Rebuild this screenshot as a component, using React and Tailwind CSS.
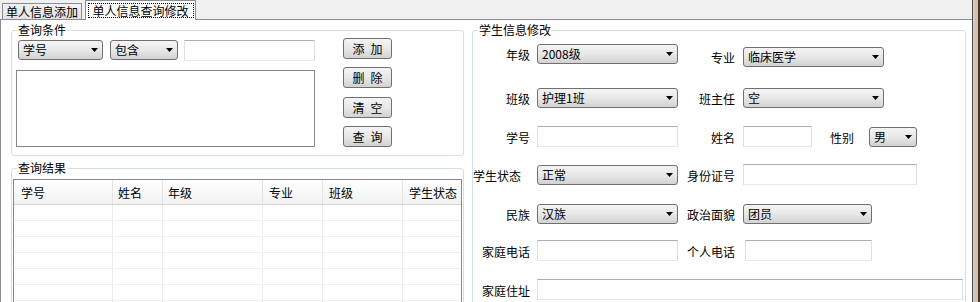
import React from 'react';

const FONT = "font-['Noto_Sans_CJK_SC','Noto_Sans_CJK_TC',sans-serif]";

function Arrow() {
  return (
    <svg width="7" height="4" viewBox="0 0 7 4" className="ml-auto shrink-0">
      <path d="M0 0h7L3.5 4z" fill="#000" />
    </svg>
  );
}

function Combo({ value, className = '' }) {
  return (
    <div
      className={`flex items-center h-[20px] rounded-[3px] border border-[#707070] bg-linear-to-b from-[#f4f4f4] via-[#e8e8e8] to-[#d2d2d2] pl-[4px] pr-[4px] leading-none whitespace-nowrap ${className}`}
    >
      <span>{value}</span>
      <Arrow />
    </div>
  );
}

function TextBox({ className = '' }) {
  return (
    <input
      readOnly
      className={`h-[21px] bg-white border border-t-[#abadb3] border-x-[#dbdfe6] border-b-[#e3e9ef] outline-none ${className}`}
    />
  );
}

function Btn({ children, className = '' }) {
  return (
    <button
      className={`h-[21px] w-[49px] rounded-[3px] border border-[#707070] bg-linear-to-b from-[#f4f4f4] via-[#e8e8e8] to-[#d2d2d2] leading-none whitespace-pre ${className}`}
    >
      {children}
    </button>
  );
}

function Group({ title, className = '', children }) {
  return (
    <fieldset className={`border border-[#d5dfe5] rounded-[3px] ${className}`}>
      <legend className="ml-[5px] px-[1px] leading-[14px]">{title}</legend>
      {children}
    </fieldset>
  );
}

function Label({ children, className = '' }) {
  return <div className={`w-[57px] shrink-0 text-right leading-none pt-[2px] whitespace-nowrap ${className}`}>{children}</div>;
}

const COLS = [
  { name: '学号', w: 'w-[99px]', pad: 'pl-[7px]' },
  { name: '姓名', w: 'w-[50px]', pad: 'pl-[5px]' },
  { name: '年级', w: 'w-[100px]', pad: 'pl-[5px]' },
  { name: '专业', w: 'w-[60px]', pad: 'pl-[6px]' },
  { name: '班级', w: 'w-[80px]', pad: 'pl-[6px]' },
  { name: '学生状态', w: 'w-[58px]', pad: 'pl-[6px]' },
];

function ResultGrid() {
  const rows = [0, 1, 2, 3, 4, 5, 6];
  return (
    <div className="w-[449px] h-[140px] border-l border-t border-r border-[#828790] bg-white overflow-hidden">
      <div className="flex h-[25px] border-b border-[#d5d5d5] bg-linear-to-b from-white to-[#f1f2f4]">
        {COLS.map((c, i) => (
          <div
            key={c.name}
            className={`${c.w} ${c.pad} flex items-center pt-[2px] leading-none whitespace-nowrap ${i < COLS.length - 1 ? 'border-r border-[#e2e3e5]' : ''}`}
          >
            {c.name}
          </div>
        ))}
      </div>
      {rows.map((r) => (
        <div key={r} className="flex h-[16px] border-b border-[#efefef]">
          {COLS.map((c, i) => (
            <div key={c.name} className={`${c.w} ${i < COLS.length - 1 ? 'border-r border-[#ececec]' : ''}`} />
          ))}
        </div>
      ))}
    </div>
  );
}

export default function App() {
  return (
    <div className={`w-[980px] h-[302px] overflow-hidden flex bg-[#f0f0f0] text-[12px] text-black ${FONT}`}>
      <div className="w-[972px] flex flex-col">
        {/* tabs */}
        <div className="h-[19px] flex items-end pl-[2px] relative z-10 leading-none">
          <div className="h-[16px] w-[80px] border border-b-0 border-[#898c95] bg-linear-to-b from-[#f3f3f3] to-[#e2e2e2] flex items-center justify-center pt-[1px] whitespace-nowrap">
            单人信息添加
          </div>
          <div className="ml-[3px] h-[20px] w-[111px] -mb-[1px] border border-b-0 border-[#898c95] bg-white flex items-start justify-center pt-[2px]">
            <span className="h-[15px] w-[106px] border border-dotted border-black flex items-center justify-center whitespace-nowrap">
              单人信息查询修改
            </span>
          </div>
        </div>

        {/* page */}
        <div className="flex-1 border-l border-t border-[#898c95] bg-white flex pl-[10px] pt-[3px] gap-[8px]">
          <div className="w-[453px] flex flex-col">
            <Group title="查询条件" className="h-[133px]">
              <div className="flex pl-[4px] pt-[3px]">
                <div className="w-[299px] flex flex-col">
                  <div className="flex items-start ml-[2px]">
                    <Combo value="学号" className="w-[85px]" />
                    <Combo value="包含" className="w-[68px] ml-[7px]" />
                    <TextBox className="w-[131px] ml-[6px]" />
                  </div>
                  <div className="mt-[9px] h-[77px] w-[299px] border border-[#828790] bg-white" />
                </div>
                <div className="ml-[28px] -mt-[2px] flex flex-col">
                  <Btn>{'添\u2002加'}</Btn>
                  <Btn className="mt-[8px]">{'删\u2002除'}</Btn>
                  <Btn className="mt-[9px]">{'清\u2002空'}</Btn>
                  <Btn className="mt-[8px]">{'查\u2002询'}</Btn>
                </div>
              </div>
            </Group>
            <Group title="查询结果" className="mt-[5px] h-[160px]">
              <div className="pl-[1px] pt-[4px]">
                <ResultGrid />
              </div>
            </Group>
          </div>

          <Group title="学生信息修改" className="w-[494px] h-[300px]">
            <div className="flex flex-col">
              <div className="flex items-start mt-[7px]">
                <div className="flex items-center">
                  <Label>年级</Label>
                  <Combo value="2008级" className="w-[141px] ml-[7px]" />
                </div>
                <div className="flex items-center mt-[3px]">
                  <Label>专业</Label>
                  <Combo value="临床医学" className="w-[141px] ml-[8px]" />
                </div>
              </div>
              <div className="flex items-center h-[21px] mt-[20px]">
                <Label>班级</Label>
                <Combo value="护理1班" className="w-[141px] ml-[7px]" />
                <Label>班主任</Label>
                <Combo value="空" className="w-[141px] ml-[8px]" />
              </div>
              <div className="flex items-center h-[21px] mt-[18px]">
                <Label>学号</Label>
                <TextBox className="w-[141px] ml-[7px]" />
                <Label>姓名</Label>
                <TextBox className="w-[69px] ml-[8px]" />
                <div className="ml-[18px] leading-none pt-[2px]">性别</div>
                <Combo value="男" className="w-[48px] ml-[15px]" />
              </div>
              <div className="flex items-center h-[21px] mt-[17px]">
                <Label className="pr-[10px]">学生状态</Label>
                <Combo value="正常" className="w-[141px] ml-[7px]" />
                <Label>身份证号</Label>
                <TextBox className="w-[174px] ml-[8px]" />
              </div>
              <div className="flex items-center h-[21px] mt-[18px]">
                <Label>民族</Label>
                <Combo value="汉族" className="w-[141px] ml-[7px]" />
                <Label>政治面貌</Label>
                <Combo value="团员" className="w-[129px] ml-[8px]" />
              </div>
              <div className="flex items-center h-[21px] mt-[16px]">
                <Label>家庭电话</Label>
                <TextBox className="w-[141px] ml-[7px]" />
                <Label>个人电话</Label>
                <TextBox className="w-[127px] ml-[10px]" />
              </div>
              <div className="flex items-center h-[21px] mt-[18px]">
                <Label>家庭住址</Label>
                <TextBox className="w-[426px] ml-[7px]" />
              </div>
            </div>
          </Group>
        </div>
      </div>
      {/* window edge */}
      <div className="w-[8px] bg-[linear-gradient(to_right,#4a4a4a_0_1px,#d6cec6_1px_3px,#dcbda2_3px_6px,#3a3a3a_6px)]" />
    </div>
  );
}
